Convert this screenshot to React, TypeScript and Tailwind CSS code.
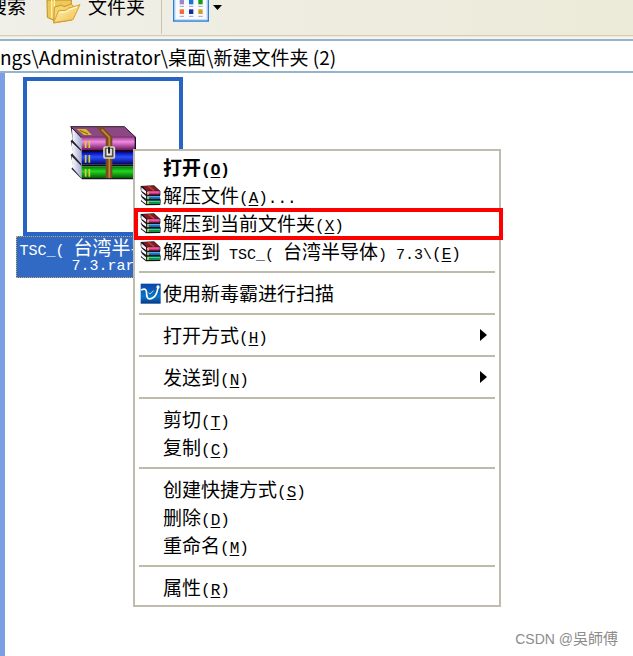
import React from 'react';

interface MenuEntry {
  label: string;
  hotkey?: string;
  tail?: string;
  icon?: 'rar' | 'scan';
  bold?: boolean;
  submenu?: boolean;
  marked?: boolean;
}

// Each group is separated by a rule
const menuGroups: MenuEntry[][] = [
  [
    { label: '打开', hotkey: 'O', bold: true },
    { label: '解压文件', hotkey: 'A', tail: '...', icon: 'rar' },
    { label: '解压到当前文件夹', hotkey: 'X', icon: 'rar', marked: true },
    { label: '解压到 TSC_( 台湾半导体) 7.3\\', hotkey: 'E', icon: 'rar' },
  ],
  [{ label: '使用新毒霸进行扫描', icon: 'scan' }],
  [{ label: '打开方式', hotkey: 'H', submenu: true }],
  [{ label: '发送到', hotkey: 'N', submenu: true }],
  [
    { label: '剪切', hotkey: 'T' },
    { label: '复制', hotkey: 'C' },
  ],
  [
    { label: '创建快捷方式', hotkey: 'S' },
    { label: '删除', hotkey: 'D' },
    { label: '重命名', hotkey: 'M' },
  ],
  [{ label: '属性', hotkey: 'R' }],
];

export default function App() {
  return (
    <div className="relative flex min-h-screen flex-col overflow-hidden bg-white font-['Noto_Sans_CJK_SC',sans-serif] text-[19px] text-black">
      <Toolbar />
      <AddressBar />

      <main className="flex flex-1">
        <div className="w-[5px] shrink-0 bg-[#7b9ee4]"></div>
        <div className="flex-1 pt-1 pl-[11px]">
          <button type="button" className="flex w-[174px] flex-col items-center">
            <span className="flex h-[159px] w-40 items-center justify-center border-4 border-[#2864c4] bg-white pb-2">
              <ArchiveIcon />
            </span>
            <span className="flex w-full flex-col items-center border border-dotted border-[#d8a860] bg-[#316ac5] text-white">
              <span className="h-5 leading-5">
                <MixedText text="TSC_( 台湾半导体 )" />
              </span>
              <span className="h-5 font-['Liberation_Mono',monospace] text-[15px] leading-5">7.3.rar</span>
            </span>
          </button>
        </div>
      </main>

      <ContextMenu />

      <footer className="absolute right-[15px] bottom-2 text-[15px] leading-[18px] text-[#8c8c8c]">
        <span className="font-['Liberation_Sans',sans-serif] text-[14px]">CSDN @</span>吳師傅
      </footer>
    </div>
  );
}

function Toolbar() {
  return (
    <header className="flex h-[39px] items-start border-b-2 border-[#f6f4ec] bg-[#ece9d8] pb-px">
      <div className="flex h-9 w-full items-start overflow-hidden border-b border-[#d8ccb4] bg-linear-to-r from-[#f0efe8] to-[#ecead8]">
        <button type="button" className="-ml-3 h-3 shrink-0 leading-3">搜索</button>
        <button type="button" className="ml-5 flex shrink-0 items-start gap-[7px]">
          <FolderIcon />
          <span className="h-3 leading-3">文件夹</span>
        </button>
        <div className="ml-4 h-[34px] w-px shrink-0 bg-[#c9c5b2]"></div>
        <button type="button" aria-label="查看" className="ml-[11px] flex shrink-0 items-start gap-1">
          <ViewIcon />
          <svg className="mt-[5px]" width="9" height="5" viewBox="0 0 9 5">
            <path d="M0 0h9L4.5 5z" fill="#000" />
          </svg>
        </button>
      </div>
    </header>
  );
}

function AddressBar() {
  return (
    <div className="border-y-2 border-[#94b3cc] bg-white">
      <input
        type="text"
        aria-label="地址"
        defaultValue={'ngs\\Administrator\\桌面\\新建文件夹 (2)'}
        className="block h-[30px] w-full bg-transparent outline-none"
      />
    </div>
  );
}

function ContextMenu() {
  return (
    <div role="menu" className="absolute top-[149px] left-[133px] min-w-[368px] border-2 border-[#bfbcad] bg-white pt-0.5 pb-1">
      {menuGroups.map((group, idx) => (
        <React.Fragment key={idx}>
          {idx > 0 && <hr className="mx-1 my-1.5 border-t-2 border-[#bfbbab]" />}
          {group.map((entry) => (
            <MenuItem key={entry.label} entry={entry} />
          ))}
        </React.Fragment>
      ))}
    </div>
  );
}

function MenuItem({ entry }: { entry: MenuEntry }) {
  return (
    <button
      type="button"
      role="menuitem"
      className={`relative flex h-7 w-full items-center gap-[3px] px-[5px] pr-3 text-left leading-7 whitespace-nowrap ${entry.bold ? 'font-bold' : ''}`}
    >
      <span className="w-5 shrink-0">
        {entry.icon === 'rar' && <SmallArchiveIcon />}
        {entry.icon === 'scan' && <ScanIcon />}
      </span>
      <span className="flex-1">
        <MixedText text={entry.label} />
        {entry.hotkey && (
          <span className="font-['Liberation_Mono',monospace] text-[16px] leading-none">
            (<u className="underline-offset-2">{entry.hotkey}</u>){entry.tail}
          </span>
        )}
      </span>
      {entry.submenu && (
        <svg className="shrink-0" width="7" height="12" viewBox="0 0 7 12">
          <path d="M0 0v12l7-6z" fill="#000" />
        </svg>
      )}
      {entry.marked && <span className="absolute -top-px -right-1 -bottom-[3px] -left-px border-4 border-[#ff0000]"></span>}
    </button>
  );
}

// Latin runs are set in a half-width mono face, the rest keeps the CJK font
function MixedText({ text }: { text: string }) {
  return (
    <>
      {text.split(/([\x20-\x7e]+)/).map((run, idx) =>
        idx % 2 === 1 ? (
          <span key={idx} className="font-['Liberation_Mono',monospace] text-[15px] leading-none whitespace-pre">{run}</span>
        ) : (
          run
        )
      )}
    </>
  );
}

function ArchiveIcon() {
  return (
    <svg width="66" height="54" viewBox="0 0 198 162">
      <defs>
        <linearGradient id="plum" x1="0" y1="0" x2="0" y2="1">
          <stop offset="0" stopColor="#a83f98" />
          <stop offset=".35" stopColor="#f08ce0" />
          <stop offset="1" stopColor="#6b1560" />
        </linearGradient>
        <linearGradient id="blue" x1="0" y1="0" x2="0" y2="1">
          <stop offset="0" stopColor="#0404a0" />
          <stop offset=".4" stopColor="#2a50ff" />
          <stop offset="1" stopColor="#040468" />
        </linearGradient>
        <linearGradient id="green" x1="0" y1="0" x2="0" y2="1">
          <stop offset="0" stopColor="#067006" />
          <stop offset=".4" stopColor="#20d820" />
          <stop offset="1" stopColor="#045004" />
        </linearGradient>
        <linearGradient id="pages" x1="0" y1="0" x2="1" y2="0">
          <stop offset="0" stopColor="#ffffff" />
          <stop offset="1" stopColor="#a8acd4" />
        </linearGradient>
      </defs>
      <path d="M2 2L34 34V158L4 128L10 122L2 86L10 80L2 45L8 40z" fill="#25252d" />
      <path d="M6 7L34 37V71L8 43zM5 49L34 76V114L8 84zM5 91L34 120V156L8 126z" fill="url(#pages)" />
      <path d="M2 2H163L197 34H35z" fill="#8b4884" stroke="#2b1829" strokeWidth="3" />
      <path d="M35 34H196V72H35z" fill="url(#plum)" />
      <path d="M35 72H196V78H35z" fill="#160a22" />
      <path d="M35 78H196V115H35z" fill="url(#blue)" />
      <path d="M35 115H196V121H35z" fill="#06101a" />
      <path d="M35 121H196V158H35z" fill="url(#green)" />
      <path d="M35 158H196M196 34V158" fill="none" stroke="#161020" strokeWidth="4" />
      <path d="M20 9H48L66 27H42z" fill="#d8b926" />
      <path d="M29 13L54 24" stroke="#7e5c20" strokeWidth="3" />
      <path d="M79 3H98L127 32V157H107V37z" fill="#7c4a1c" />
      <path d="M95 10L118 34V155" fill="none" stroke="#c08a3c" strokeWidth="5" />
      <path d="M47 44V66M58 44V66M47 87V110M58 87V110M47 129V152M58 129V152" fill="none" stroke="#d9cd3b" strokeWidth="5" />
      <rect x="102" y="63" width="31" height="33" rx="4" fill="#555049" stroke="#d9d6ca" strokeWidth="5" />
      <path d="M112 68V86H123V68" fill="none" stroke="#f0eee8" strokeWidth="5" />
      <path d="M117 62V80" stroke="#161616" strokeWidth="5" />
    </svg>
  );
}

function SmallArchiveIcon() {
  return (
    <svg className="block" width="21" height="21" viewBox="0 0 63 63">
      <path d="M2 3L42 1L61 18V30L59 35L62 46L61 60L18 61L2 48L7 42L2 30L7 26L2 14z" fill="#15121a" />
      <path d="M4 7L18 19V27L4 17zM4 21L18 33V41L5 32zM4 37L18 49V57L5 47z" fill="#f4f4fb" />
      <path d="M8 4L41 3L58 17H21z" fill="#8e1725" />
      <path d="M20 19H59V28H20z" fill="#cf2b84" />
      <path d="M24 21H59" stroke="#fa85bd" strokeWidth="3" />
      <path d="M20 33H60V42H20z" fill="#1766b3" />
      <path d="M24 35H60" stroke="#62b8ef" strokeWidth="3" />
      <path d="M20 47H60V57H20z" fill="#0c9352" />
      <path d="M24 49H60" stroke="#46dfa0" strokeWidth="3" />
      <path d="M25 3L42 17" stroke="#ac552c" strokeWidth="4" />
      <path d="M24 20V29M24 34V43M24 48V57" stroke="#eed936" strokeWidth="4" />
    </svg>
  );
}

function ScanIcon() {
  return (
    <svg className="block" width="21" height="21" viewBox="0 0 63 63">
      <defs>
        <linearGradient id="scan" x1="0" y1="0" x2="0" y2="1">
          <stop offset="0" stopColor="#0c45a5" />
          <stop offset=".65" stopColor="#0876c5" />
          <stop offset="1" stopColor="#073887" />
        </linearGradient>
      </defs>
      <rect x="2" y="2" width="60" height="60" fill="url(#scan)" />
      <path d="M5 20C17 15 20 21 20 34C20 50 31 51 42 42C50 35 52 26 54 14" fill="none" stroke="#fff" strokeWidth="5" strokeLinecap="round" />
      <path d="M26 29C30 36 35 29 40 23" fill="none" stroke="#e9f8ff" strokeWidth="3" />
      <circle cx="54" cy="12" r="5" fill="#fff" />
    </svg>
  );
}

function FolderIcon() {
  return (
    <svg width="35" height="24" viewBox="0 0 105 72">
      <defs>
        <linearGradient id="folder" x1="0" y1="0" x2="1" y2="1">
          <stop offset="0" stopColor="#fff6bb" />
          <stop offset="1" stopColor="#f0bd45" />
        </linearGradient>
      </defs>
      <path d="M3 0H76V45L21 60L4 52z" fill="#edc95c" stroke="#c38d22" strokeWidth="3" />
      <path d="M17 0V54M25 0V54" stroke="#fff0a5" strokeWidth="4" />
      <path d="M25 21L48 15L54 20L76 12L84 20L78 60L23 69z" fill="#f5d36e" stroke="#cb942a" strokeWidth="3" />
      <path d="M23 68L38 32L60 31L66 25L102 14L81 59z" fill="url(#folder)" stroke="#d6a02f" strokeWidth="3" />
      <path d="M42 37L63 35L69 29L93 21" fill="none" stroke="#fffce6" strokeWidth="3" />
    </svg>
  );
}

function ViewIcon() {
  return (
    <svg width="36" height="22" viewBox="0 0 108 66">
      <path d="M2 0V63H106V0" fill="#f8faff" stroke="#2e7ddb" strokeWidth="5" />
      <path d="M6 0V59H102V0" fill="none" stroke="#b9d7f7" strokeWidth="3" />
      <path d="M20 0H33V13H20z" fill="#9b8bc7" />
      <path d="M48 0H61V13H48z" fill="#1678dc" />
      <path d="M76 0H89V13H76z" fill="#10a018" />
      <path d="M20 28H33V42H20z" fill="#f46b38" />
      <path d="M48 28H61V42H48z" fill="#112e9d" />
      <path d="M76 28H89V42H76z" fill="#d1a01c" />
      <path d="M20 19H33M48 19H61M76 19H89M20 49H33M48 49H61M76 49H89" stroke="#a8a8ad" strokeWidth="3" />
    </svg>
  );
}
